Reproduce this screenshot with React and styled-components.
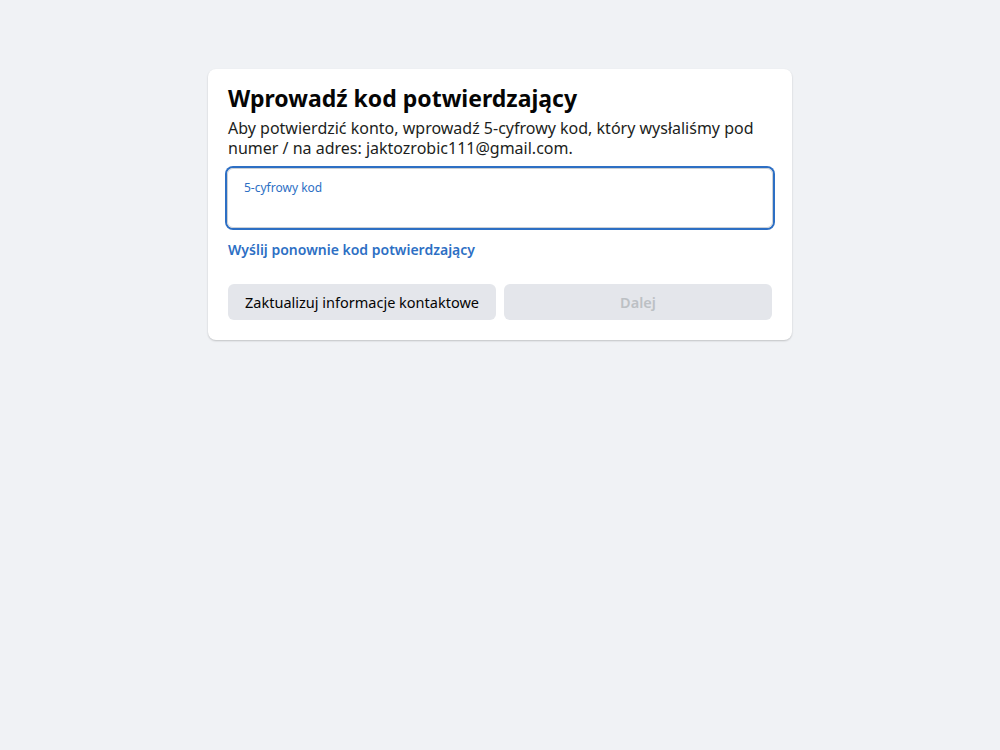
import styled, { createGlobalStyle } from 'styled-components';

const GlobalStyle = createGlobalStyle`
    html, body {
        margin: 0;
        padding: 0;
        background: #f0f2f5;
        font-family: "Segoe UI", "Noto Sans", Helvetica, Arial, sans-serif;
    }
`;

const Page = styled.div`
    min-height: 750px;
    display: flex;
    align-items: flex-start;
    justify-content: center;
    padding-top: 69px;
    box-sizing: border-box;
`;

const Card = styled.div`
    width: 584px;
    background: #fff;
    border-radius: 8px;
    box-shadow: 0 1px 2px rgba(0, 0, 0, 0.2);
    padding: 14px 20px 20px;
    box-sizing: border-box;
`;

const Title = styled.h2`
    margin: 0;
    font-size: 23px;
    font-weight: 700;
    line-height: 30px;
    color: #050505;
`;

const Text = styled.p`
    margin: 5px 0 10px;
    font-size: 16px;
    line-height: 20px;
    color: #1c1e21;
`;

const Field = styled.label`
    display: flex;
    flex-direction: column;
    height: 60px;
    margin: 0 -1px;
    border: 1px solid #ccd0d5;
    border-radius: 6px;
    box-shadow: 0 0 0 2px #2d6fc4;
    padding: 11px 16px 0;
    box-sizing: border-box;
    cursor: text;
`;

const FieldLabel = styled.span`
    font-size: 12px;
    line-height: 16px;
    color: #2d6fc4;
`;

const FieldInput = styled.input`
    border: 0;
    outline: none;
    padding: 0;
    font: inherit;
    font-size: 16px;
    background: transparent;
`;

const Link = styled.a`
    display: inline-block;
    margin-top: 12px;
    font-size: 14px;
    font-weight: 600;
    line-height: 20px;
    color: #2d6fc4;
    text-decoration: none;
    cursor: pointer;
`;

const Actions = styled.div`
    display: grid;
    grid-template-columns: 1fr 1fr;
    gap: 8px;
    margin-top: 24px;
`;

const Button = styled.button`
    height: 36px;
    border: 0;
    border-radius: 6px;
    background: #e4e6eb;
    font-family: inherit;
    font-size: 14.5px;
    font-weight: ${(p) => (p.disabled ? 600 : 400)};
    color: ${(p) => (p.disabled ? '#bcc0c4' : '#050505')};
    cursor: ${(p) => (p.disabled ? 'default' : 'pointer')};
`;

export default function App() {
    return (
        <>
            <GlobalStyle />
            <Page>
                <Card>
                    <Title>Wprowadź kod potwierdzający</Title>
                    <Text>
                        Aby potwierdzić konto, wprowadź 5-cyfrowy kod, który wysłaliśmy pod
                        numer / na adres: jaktozrobic111@gmail.com.
                    </Text>
                    <Field>
                        <FieldLabel>5-cyfrowy kod</FieldLabel>
                        <FieldInput type="text" />
                    </Field>
                    <Link>Wyślij ponownie kod potwierdzający</Link>
                    <Actions>
                        <Button>Zaktualizuj informacje kontaktowe</Button>
                        <Button disabled>Dalej</Button>
                    </Actions>
                </Card>
            </Page>
        </>
    );
}
